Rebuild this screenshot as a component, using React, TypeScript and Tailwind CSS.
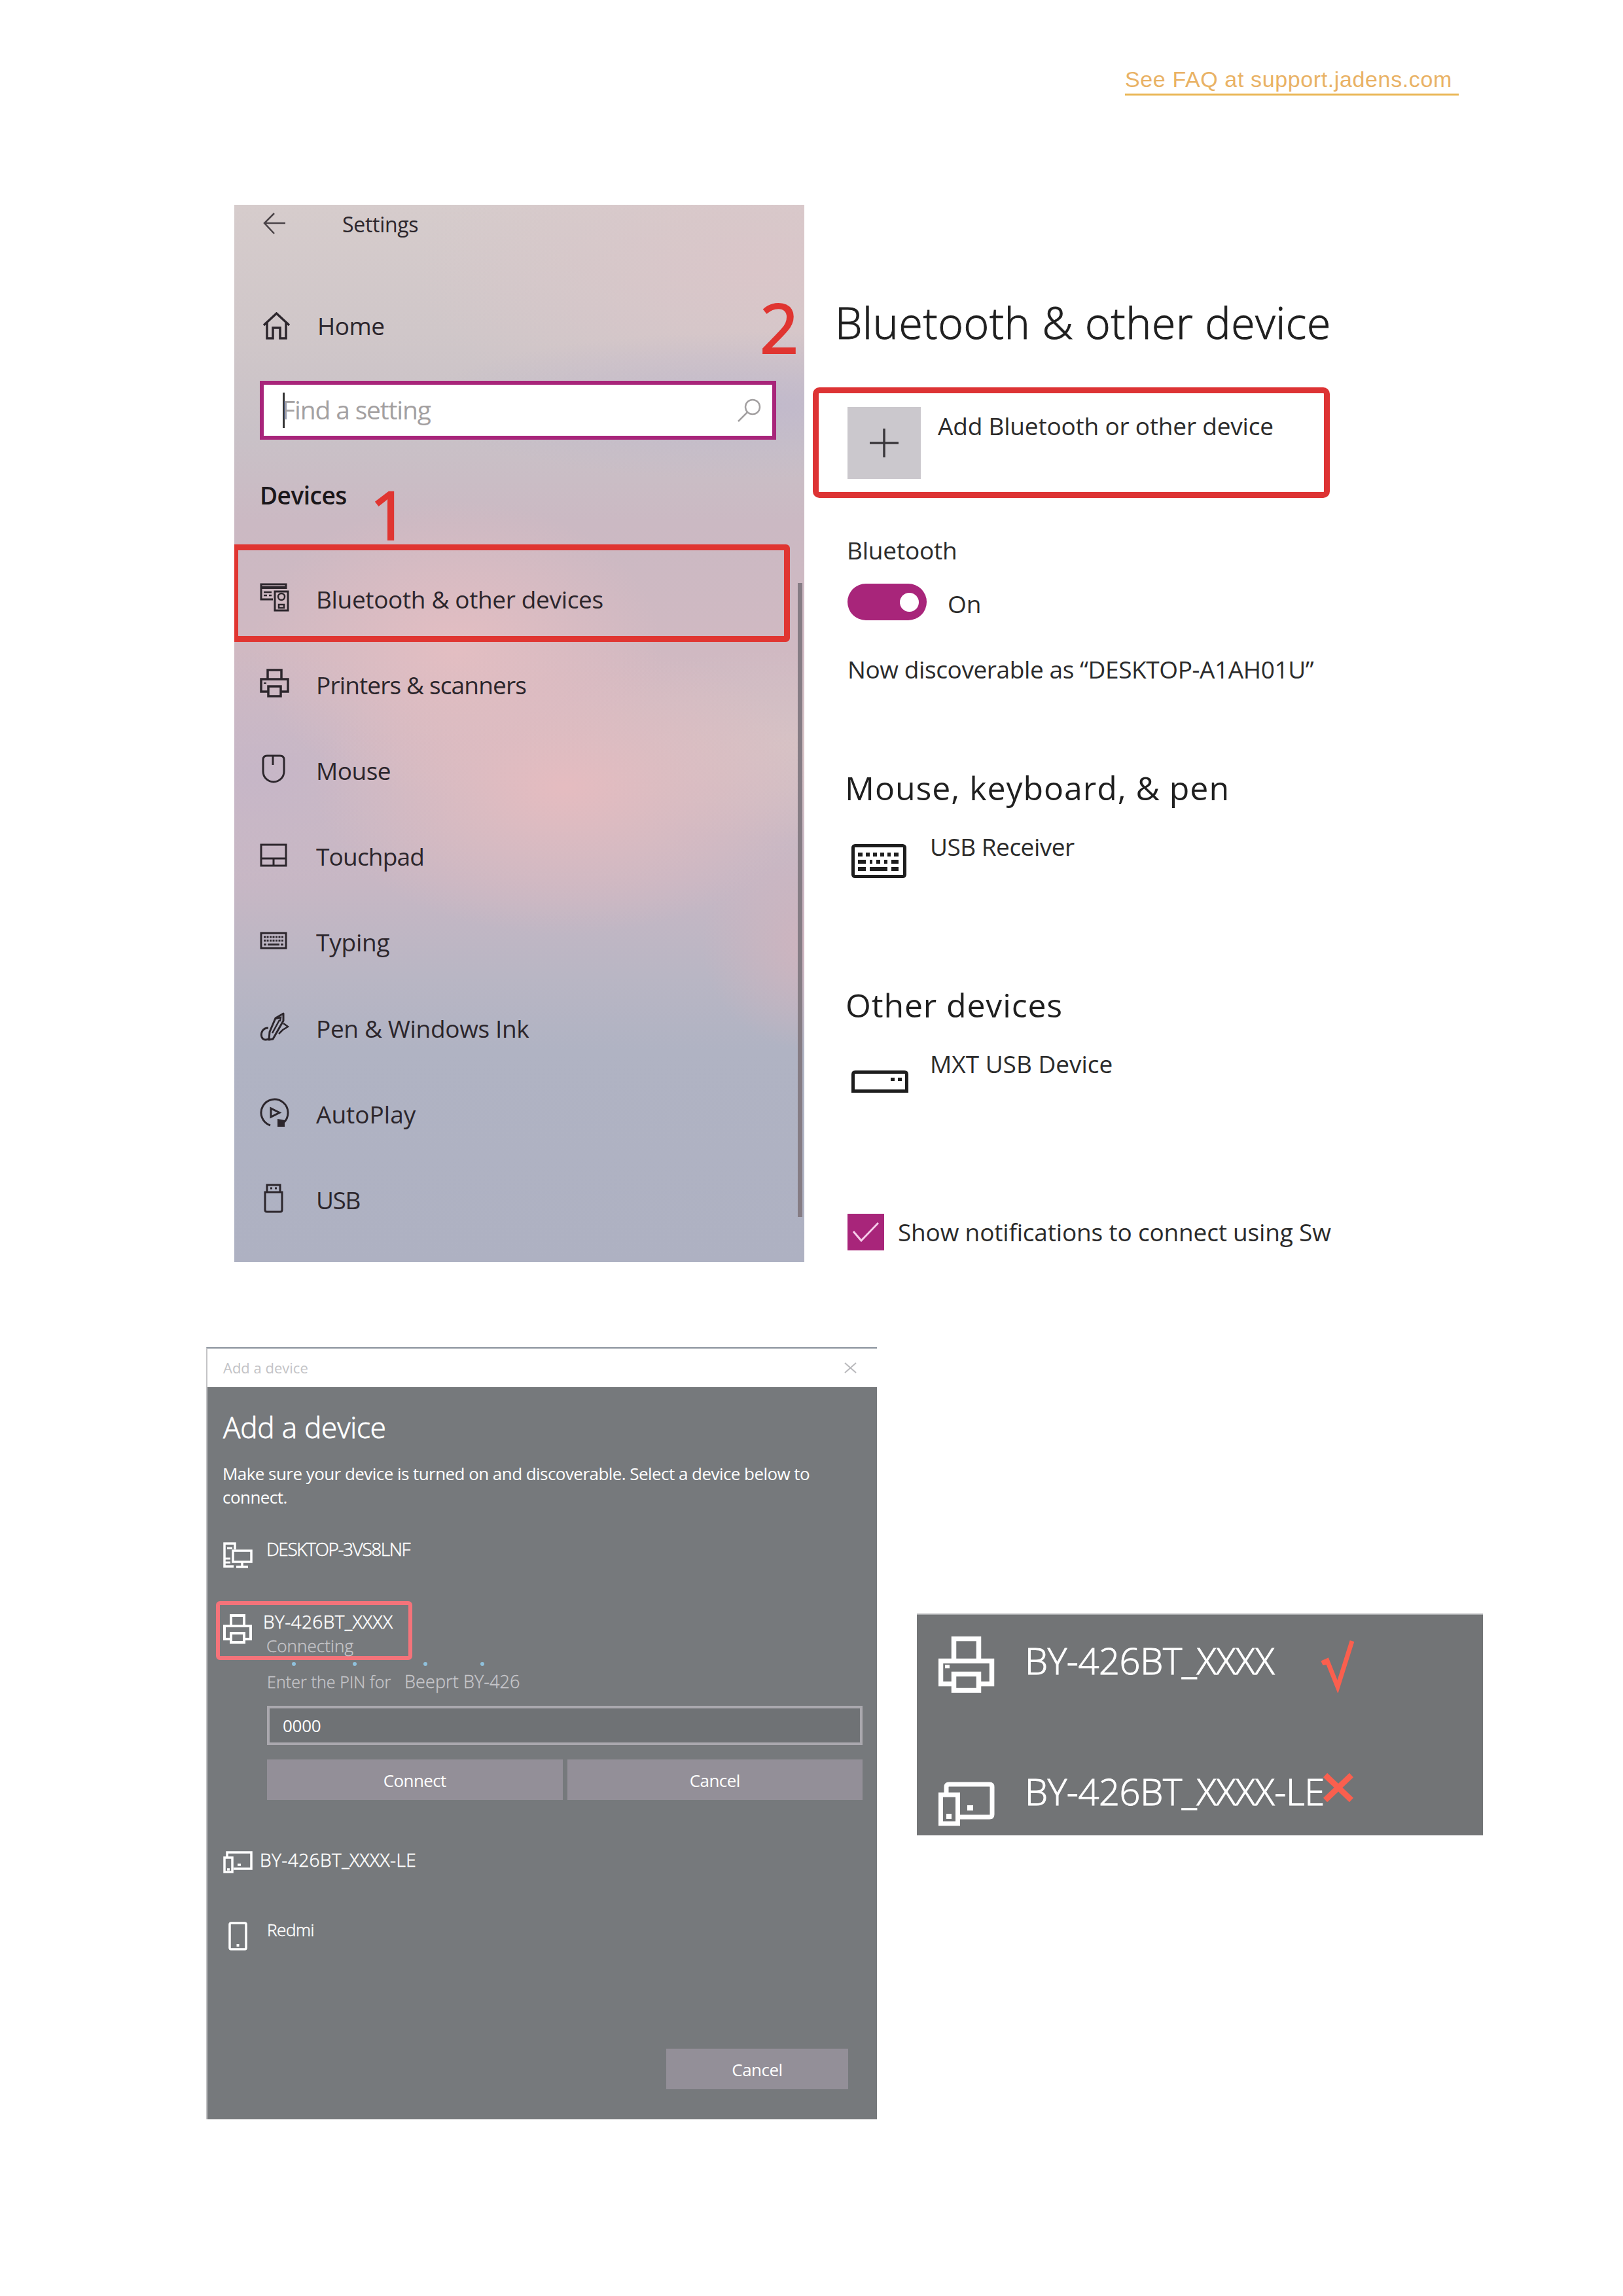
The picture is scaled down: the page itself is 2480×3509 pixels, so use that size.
import type { ReactNode } from 'react';

type MenuItem = {
  label: string;
  icon: ReactNode;
  tracking: string;
};

const printerIcon = (
  <svg width="45" height="44" viewBox="0 0 45 44" fill="none" stroke="currentColor" strokeWidth="3.5">
    <path d="M12 16V2h21v14" />
    <path d="M12 35H2V16h41v19H33" />
    <path d="M13 42V27h19v15z" />
    <path d="M6 22h4" strokeWidth="2" />
  </svg>
);

const menu: MenuItem[] = [
  {
    label: 'Bluetooth & other devices',
    tracking: 'tracking-[-0.35px]',
    icon: (
      <svg width="45" height="44" viewBox="0 0 45 44" fill="none" stroke="currentColor" strokeWidth="3">
        <path d="M20 25H2V2h38v7" />
        <path d="M2 7h38" strokeWidth="4" />
        <path d="M6 14h12M6 19h5M14 19h4" strokeWidth="2.5" />
        <path d="M23 13h20v29H23z" />
        <circle cx="33" cy="21" r="5" strokeWidth="2.5" />
        <path d="M29 38v-5h8v5z" strokeWidth="2.5" />
      </svg>
    ),
  },
  { label: 'Printers & scanners', tracking: 'tracking-[-0.85px]', icon: printerIcon },
  {
    label: 'Mouse',
    tracking: 'tracking-[-0.5px]',
    icon: (
      <svg width="42" height="44" viewBox="0 0 42 44" fill="none" stroke="currentColor" strokeWidth="3">
        <path d="M11 2h20q6 0 6 6v18a16 16 0 0 1-32 0V8q0-6 6-6z" />
        <path d="M20 3v13" />
      </svg>
    ),
  },
  {
    label: 'Touchpad',
    tracking: 'tracking-[-0.8px]',
    icon: (
      <svg width="42" height="36" viewBox="0 0 42 36" fill="none" stroke="currentColor" strokeWidth="3">
        <path d="M2 2h38v32H2zM2 23h38M21 23v11" />
      </svg>
    ),
  },
  {
    label: 'Typing',
    tracking: 'tracking-[-0.2px]',
    icon: (
      <svg width="42" height="27" viewBox="0 0 42 27" fill="none" stroke="currentColor" strokeWidth="3">
        <path d="M2 2h38v23H2z" />
        <path d="M6 8h30M6 13.5h30" strokeDasharray="3 1.5" />
        <path d="M6 19.5h4M12 19.5h18M32 19.5h4" />
      </svg>
    ),
  },
  {
    label: 'Pen & Windows Ink',
    tracking: 'tracking-[-0.35px]',
    icon: (
      <svg width="45" height="45" viewBox="0 0 45 45" fill="none" stroke="currentColor" strokeWidth="3">
        <path d="M36 2L24 9l-9 21-1 12 6-1L36 13z" strokeLinejoin="round" />
        <path d="M24 10l8-2-1 6M19 32l11-20" strokeWidth="2.5" />
        <path d="M13 24C4 24 1 32 3 38c2 5 8 5 12 2" />
        <path d="M36 17l7 5-8 5-6 6" strokeWidth="2.5" />
      </svg>
    ),
  },
  {
    label: 'AutoPlay',
    tracking: 'tracking-[0px]',
    icon: (
      <svg width="45" height="45" viewBox="0 0 45 45" fill="none" stroke="currentColor" strokeWidth="3">
        <path d="M16 42A20.500 20.500 0 1 1 36 38" />
        <path d="M17 16v13l13-6.500z" />
        <path d="M27 32l11 2v10H27z" fill="currentColor" stroke="none" />
      </svg>
    ),
  },
  {
    label: 'USB',
    tracking: 'tracking-[-1.4px]',
    icon: (
      <svg width="42" height="45" viewBox="0 0 42 45" fill="none" stroke="currentColor" strokeWidth="3">
        <path d="M11 13V2h20v11" />
        <path d="M8 13h26v27q0 3-3 3H11q-3 0-3-3z" />
        <path d="M16 7h3M23 7h3" />
      </svg>
    ),
  },
];

function Sidebar() {
  return (
    <aside className="relative flex h-[1616px] w-[871px] shrink-0 flex-col bg-[radial-gradient(ellipse_44%_14%_at_58%_55%,#e5bcc0_0%,#e2bcc0a0_40%,transparent_100%),radial-gradient(ellipse_36%_14%_at_39%_42%,#e3bec2_0%,transparent_100%),radial-gradient(ellipse_20%_10%_at_102%_70%,#cfb4be_0%,transparent_100%),radial-gradient(ellipse_36%_12%_at_4%_54%,#c6b6c7_0%,transparent_100%),radial-gradient(ellipse_50%_9%_at_100%_51%,#d6c2c5_0%,transparent_100%),radial-gradient(ellipse_60%_7%_at_92%_19%,#c1b9cb_0%,transparent_100%),radial-gradient(ellipse_60%_16%_at_92%_6%,#dac6c9_0%,transparent_100%),linear-gradient(180deg,#d6cccc_0%,#d0c7c9_12%,#c9c1c7_22%,#cbb9c3_30%,#d0b9c2_42%,#cebbc4_54%,#c7b7c4_64%,#b9b6c4_73%,#b0b3c3_80%,#aeb1c2_100%)] text-[#2c262c]">
      <div className="flex h-[58px] items-center pl-[44px]">
        <svg width="34" height="34" viewBox="0 0 34 34" fill="none" stroke="#4a4347" strokeWidth="2.5">
          <path d="M17 1L2 16l15 16M2 16h32" />
        </svg>
        <span className="ml-[87px] pt-[2px] text-[32px] leading-[58px] tracking-[-0.3px]">Settings</span>
      </div>

      <div className="mt-[97px] flex h-[60px] items-center pl-[43px]">
        <svg width="43" height="42" viewBox="0 0 43 42" fill="none" stroke="currentColor" strokeWidth="3.5">
          <path d="M2 20L21.5 2 41 20" />
          <path d="M7 16v24h9V24h11v16h9V16" />
        </svg>
        <span className="ml-[41px] text-[37px] leading-[60px] tracking-[-0.5px]">Home</span>
      </div>

      <div className="mt-[54px] ml-[39px] flex h-[90px] w-[789px] items-center border-[6px] border-[#a8257a] bg-white pr-[17px] pl-[29px]">
        <span className="h-[54px] w-[3px] bg-[#333]" />
        <span className="-ml-[4px] pb-[2px] text-[39px] leading-[60px] tracking-[-1.15px] text-[#a3a0a1]">Find a setting</span>
        <svg className="ml-auto" width="36" height="36" viewBox="0 0 36 36" fill="none" stroke="#a3a0a1" strokeWidth="2.5">
          <circle cx="23" cy="13" r="11" />
          <path d="M15 21L1 35" />
        </svg>
      </div>

      <h2 className="mt-[60px] pl-[39px] text-[37px] leading-[50px] font-semibold tracking-[-0.5px] text-[#1b171a]">
        Devices
      </h2>

      <ul className="mt-[68px]">
        {menu.map((item) => (
          <li key={item.label} className="flex h-[131.2px] items-center pl-[39px]">
            <span className="mb-[5px] flex w-[45px]">{item.icon}</span>
            <span className={'ml-[41px] text-[37px] leading-[60px] ' + item.tracking}>{item.label}</span>
          </li>
        ))}
      </ul>

      {/* step markers over the panel */}
      <span className="absolute top-[401px] left-[207px] text-[103px] leading-[142px] text-[#e03531] [-webkit-text-stroke:2px_#e03531]">
        1
      </span>
      <span className="absolute top-[116px] left-[803px] text-[104px] leading-[142px] text-[#e03531] [-webkit-text-stroke:2px_#e03531]">
        2
      </span>
      <div className="absolute top-[519px] left-0 h-[149px] w-[849px] rounded-r-[6px] border-[9px] border-l-[6px] border-[#e03531]" />
      <div className="absolute top-[578px] right-[3px] h-[969px] w-[7px] bg-[#857c84]" />
    </aside>
  );
}

function Details() {
  return (
    <main className="flex flex-col pt-[139px] text-[37px] text-[#2b2b2b]">
      <h1 className="ml-[47px] text-[66px] leading-[80px] font-light tracking-[0.72px] whitespace-nowrap text-[#1f1f1f] [-webkit-text-stroke:1px_#1f1f1f]">
        Bluetooth &amp; other device
      </h1>

      <div className="mt-[60px] ml-[13px] flex h-[169px] w-[790px] rounded-[10px] border-[9px] border-[#dd3334] pt-[21px] pl-[44px]">
        <div className="flex h-[110px] w-[112px] items-center justify-center bg-[#cbc8cd]">
          <svg width="44" height="44" viewBox="0 0 44 44" stroke="#3a373b" strokeWidth="3.5">
            <path d="M0 22h44M22 0v44" />
          </svg>
        </div>
        <span className="ml-[26px] pt-[1px] leading-[56px] tracking-[-0.2px] whitespace-nowrap">
          Add Bluetooth or other device
        </span>
      </div>

      <div className="mt-[60px] ml-[65px] leading-[40px] tracking-[-0.2px]">Bluetooth</div>
      <div className="mt-[31px] ml-[66px] flex h-[56px] items-center">
        <div className="flex h-[56px] w-[121px] items-center justify-end rounded-full bg-[#a8257a] pr-[12px]">
          <div className="h-[29px] w-[29px] rounded-full bg-white" />
        </div>
        <span className="ml-[32px] pt-[5px] leading-[40px]">On</span>
      </div>
      <div className="mt-[55px] ml-[66px] leading-[40px] tracking-[-0.4px] whitespace-nowrap">
        Now discoverable as “DESKTOP-A1AH01U”
      </div>

      <h2 className="mt-[131px] ml-[62px] text-[50px] leading-[60px] tracking-[0.95px] text-[#1f1f1f]">
        Mouse, keyboard, &amp; pen
      </h2>
      <div className="mt-[40px] ml-[72px] flex h-[68px]">
        <svg className="mt-[16px]" width="84" height="52" viewBox="0 0 84 52" fill="none" stroke="#1d1d1d">
          <rect x="2.5" y="2.5" width="79" height="47" rx="3" strokeWidth="5" />
          <path d="M10 16h7M22 16h6M33 16h6M44 16h6M55 16h5M65 16h7" strokeWidth="6" />
          <path d="M10 27h12M28 27h4M38 27h6M50 27h5M61 27h11" strokeWidth="6" />
          <path d="M10 38h12M28 38h27M61 38h11" strokeWidth="6" />
        </svg>
        <span className="ml-[36px] leading-[40px] tracking-[-0.5px]">USB Receiver</span>
      </div>

      <h2 className="mt-[164px] ml-[63px] text-[50px] leading-[60px] tracking-[0.85px] text-[#1f1f1f]">Other devices</h2>
      <div className="mt-[40px] ml-[72px] flex h-[64px]">
        <svg className="mt-[30px]" width="87" height="34" viewBox="0 0 87 34" fill="none" stroke="#1d1d1d" strokeWidth="5">
          <path d="M2.5 31.5V6q0-3.5 3.5-3.5h75q3.5 0 3.5 3.5v25.500z" />
          <path d="M60 13.5h6M71 13.5h6" />
        </svg>
        <span className="ml-[33px] leading-[40px]">MXT USB Device</span>
      </div>

      <div className="mt-[185px] ml-[66px] flex h-[56px] items-center">
        <div className="flex h-[56px] w-[56px] items-center justify-center bg-[#a8257a]">
          <svg width="40" height="32" viewBox="0 0 40 32" fill="none" stroke="#f6cdea" strokeWidth="3">
            <path d="M1 15l12 14L39 2" />
          </svg>
        </div>
        <span className="ml-[21px] leading-[56px] tracking-[-0.18px] whitespace-nowrap">
          Show notifications to connect using Sw
        </span>
      </div>
    </main>
  );
}

function AddDeviceDialog() {
  return (
    <section className="flex h-[1180px] w-[1025px] shrink-0 flex-col border-t-2 border-l-2 border-t-[#87909a] border-l-[#c4c4c6]">
      <div className="flex h-[59px] items-center justify-between pr-[31px] pl-[24px] text-[22px] text-[#c3c3c6]">
        <span>Add a device</span>
        <svg width="19" height="17" viewBox="0 0 19 17" stroke="#b9b9bc" strokeWidth="2">
          <path d="M1 1l17 15M18 1L1 16" />
        </svg>
      </div>

      <div className="flex flex-1 flex-col bg-[#76797c] pt-[31px] text-[28px] text-white">
        <h2 className="ml-[24px] text-[44px] leading-[60px] font-light tracking-[-0.15px] [-webkit-text-stroke:0.8px_white]">
          Add a device
        </h2>
        <p className="mt-[24px] ml-[23px] text-[26px] leading-[35.6px] tracking-[-0.55px] whitespace-nowrap">
          Make sure your device is turned on and discoverable. Select a device below to
          <br />
          connect.
        </p>

        <div className="mt-[46px] ml-[24px] flex h-[44px] whitespace-nowrap">
          <svg className="mt-[5px]" width="45" height="40" viewBox="0 0 45 40" fill="none" stroke="white" strokeWidth="3.5">
            <path d="M16 37H2V2h16v9" />
            <path d="M6 9h8M2 25h9M2 31h9" strokeWidth="3" />
            <path d="M15 13h28v17H15z" />
            <path d="M29 30v7M20 37.5h18" />
          </svg>
          <span className="ml-[21px] leading-[30px] font-light tracking-[-1.4px] [-webkit-text-stroke:0.5px_white]">
            DESKTOP-3VS8LNF
          </span>
        </div>

        <div className="mt-[51px] ml-[13px] flex h-[90px] w-[300px] rounded-[6px] border-[6px] border-[#f4737a] whitespace-nowrap">
          <div className="mt-[14px] ml-[5px]">
            <svg width="45" height="45" viewBox="0 0 45 45" fill="none" stroke="white" strokeWidth="4">
              <path d="M12 17V2h20v15" />
              <path d="M12 38H2V18h40v20H32" />
              <path d="M12 43V29h20v14z" />
            </svg>
          </div>
          <div className="mt-[10px] ml-[16px] flex flex-col">
            <span className="leading-[30px] font-light tracking-[0.4px] [-webkit-text-stroke:0.5px_white]">
              BY-426BT_XXXX
            </span>
            <span className="mt-[7px] ml-[5px] text-[26px] leading-[30px] font-light tracking-[0.1px] text-[#c6c6ca] [-webkit-text-stroke:0.4px_#c6c6ca]">
              Connecting
            </span>
          </div>
        </div>

        <div className="mt-[3px] ml-[129px] flex">
          <span className="h-[6px] w-[6px] rounded-full bg-[#8fc1dc]" />
          <span className="ml-[87px] h-[6px] w-[6px] rounded-full bg-[#8fc1dc]" />
          <span className="ml-[102px] h-[6px] w-[6px] rounded-full bg-[#8fc1dc]" />
          <span className="ml-[81px] h-[6px] w-[6px] rounded-full bg-[#8fc1dc]" />
        </div>

        <div className="mt-[9px] ml-[91px] flex text-[25px] leading-[30px] font-light whitespace-nowrap text-[#c6c6ca] [-webkit-text-stroke:0.4px_#c6c6ca]">
          <span className="w-[210px] tracking-[0.1px]">Enter the PIN for</span>
          <span className="text-[27px] tracking-[0.1px]">Beeprt BY-426</span>
        </div>

        <div className="mt-[22px] ml-[91px] flex h-[60px] w-[910px] items-center border-4 border-[#aaa8ae] bg-[#6f7275] pl-[20px] text-[26px] tracking-[-0.3px]">
          0000
        </div>
        <div className="mt-[22px] ml-[91px] flex h-[62px] w-[910px] gap-[7px] text-[26px] tracking-[-0.6px]">
          <button className="flex-1 bg-[#938f98] pt-[2px]">Connect</button>
          <button className="flex-1 bg-[#938f98] pt-[2px]">Cancel</button>
        </div>

        <div className="mt-[78px] ml-[24px] flex h-[34px] whitespace-nowrap">
          <svg width="45" height="34" viewBox="0 0 45 34" fill="none" stroke="white" strokeWidth="3.5">
            <path d="M6 9V2h37v25H16" />
            <path d="M2 10h12v22H2z" />
            <path d="M22 21h5M6 28h4" />
          </svg>
          <span className="ml-[11px] leading-[26px] font-light tracking-[0.45px] [-webkit-text-stroke:0.5px_white]">
            BY-426BT_XXXX-LE
          </span>
        </div>

        <div className="mt-[74px] ml-[32px] flex h-[44px]">
          <svg width="29" height="44" viewBox="0 0 29 44" fill="none" stroke="white" strokeWidth="3.5">
            <rect x="2" y="2" width="25" height="40" rx="2" />
            <path d="M12.5 36h4" strokeWidth="4" />
          </svg>
          <span className="ml-[30px] text-[26px] leading-[24px] font-light tracking-[-0.4px] [-webkit-text-stroke:0.5px_white]">
            Redmi
          </span>
        </div>

        <button className="mt-[150px] mr-[44px] h-[62px] w-[278px] self-end bg-[#938f98] pt-[2px] text-[26px] tracking-[-0.5px]">
          Cancel
        </button>
      </div>
    </section>
  );
}

function DeviceHint() {
  return (
    <section className="mt-[407px] ml-[61px] flex h-[339px] w-[865px] flex-col border-t-2 border-[#a9abad] bg-[#727476] pt-[33px] pl-[33px] text-[56px] leading-[60px] font-light tracking-[-0.4px] text-white">
      <div className="flex h-[86px] whitespace-nowrap">
        <svg width="86" height="86" viewBox="0 0 86 86" fill="none" stroke="white" strokeWidth="7.5">
          <path d="M23.5 34V3.500h38V34" />
          <path d="M21 72.500H3.500v-35h78v35H64" />
          <path d="M23.5 82.500v-25h38v25z" />
          <path d="M10 46h7" strokeWidth="5" />
        </svg>
        <span className="mt-[6px] ml-[46px] w-[452px] [-webkit-text-stroke:1px_white]">BY-426BT_XXXX</span>
        <svg className="mt-[4px]" width="52" height="82" viewBox="0 0 52 82" fill="none" stroke="#fa5f4e" strokeWidth="7">
          <path d="M2 37l8-4 16 40L48 3" />
          <path d="M3 36l9-1" strokeWidth="8" />
        </svg>
      </div>
      <div className="mt-[120px] flex h-[84px] whitespace-nowrap">
        <svg className="mt-[16px]" width="86" height="68" viewBox="0 0 86 68" fill="none" stroke="white" strokeWidth="7">
          <path d="M12 18V8q0-4 4-4h62q4 0 4 4v42q0 4-4 4H33" />
          <path d="M3.500 20h26v44h-26z" />
          <path d="M44 40h9M12 53h8" strokeWidth="8" />
        </svg>
        <span className="ml-[46px] w-[456px] [-webkit-text-stroke:1px_white]">BY-426BT_XXXX-LE</span>
        <svg className="mt-[3px]" width="46" height="44" viewBox="0 0 46 44" fill="none" stroke="#fa5f4e" strokeWidth="9">
          <path d="M3 3l40 38M43 3L3 41" />
        </svg>
      </div>
    </section>
  );
}

export default function App() {
  return (
    <div className="flex h-[3509px] w-[2480px] flex-col overflow-hidden bg-white font-['Open_Sans','Noto_Sans',sans-serif]">
      <header className="mt-[99px] ml-[1719px] w-[510px] border-b-[3px] border-[#e9b552] font-['Liberation_Sans',sans-serif] text-[34px] leading-[44px] tracking-[0.62px] whitespace-nowrap text-[#e9b265]">
        See FAQ at support.jadens.com
      </header>

      <div className="mt-[167px] ml-[358px] flex h-[1616px]">
        <Sidebar />
        <Details />
      </div>

      <div className="mt-[130px] ml-[315px] flex">
        <AddDeviceDialog />
        <DeviceHint />
      </div>
    </div>
  );
}
